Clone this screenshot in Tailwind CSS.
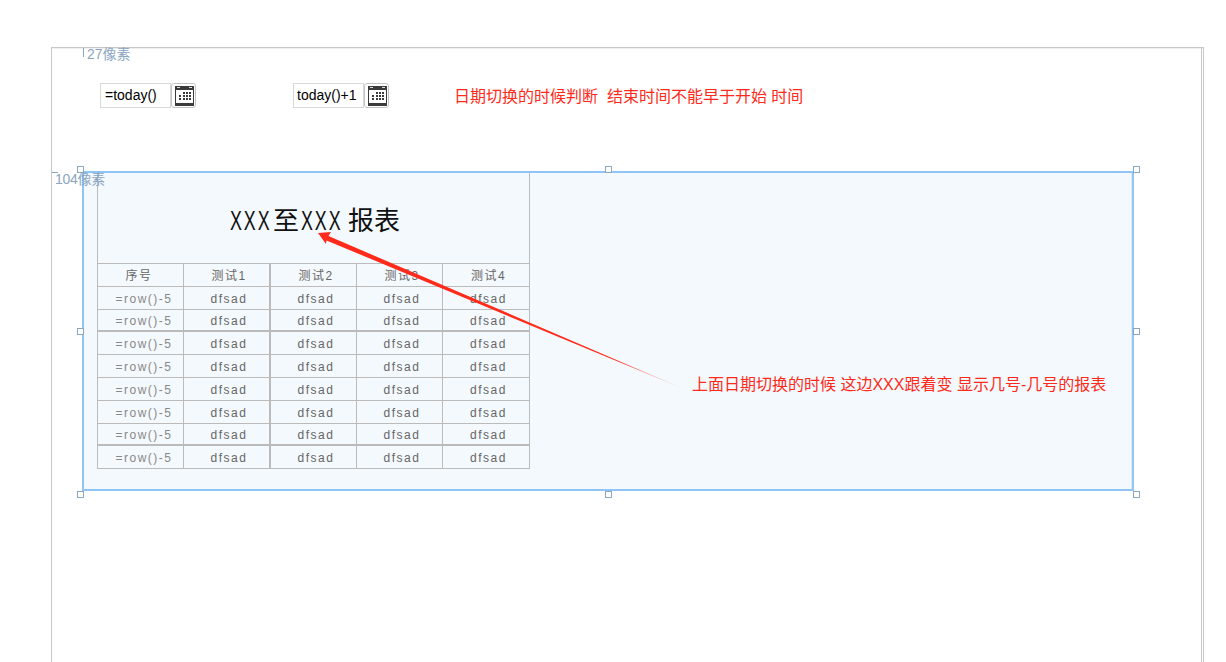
<!DOCTYPE html>
<html lang="en">
<head>
  <meta charset="UTF-8">
  <title>Report layout</title>
  <script src="https://cdn.jsdelivr.net/npm/@tailwindcss/browser@4"></script>
</head>
<body class="bg-white h-[662px] overflow-hidden relative font-['Liberation_Sans','Noto_Sans_CJK_SC',sans-serif]">

  <!-- page frame -->
  <div class="absolute left-[51px] top-[47px] w-[1153px] h-[640px] border border-[#c8c8c8] shadow-[inset_0_1px_0_#f0f0f0]">
    <div class="absolute right-[1px] top-0 bottom-0 w-px bg-[#c8c8c8]"></div>
  </div>

  <!-- ruler labels -->
  <div class="absolute left-[83px] top-[48px] w-px h-[9px] bg-[#8aa6c1]"></div>
  <div class="absolute left-[87px] top-[44px] text-[14px] leading-[20px] text-[#8aa6c1]">27像素</div>
  <div class="absolute left-[52px] top-[172px] w-[6px] h-px bg-[#8aa6c1]"></div>

  <!-- date inputs -->
  <div class="absolute left-[100px] top-[83px] flex">
    <div class="w-[71px] h-[25px] border border-[#d8d8d8] pl-[4px] text-[14px] leading-[23px] text-black">=today()</div>
    <div class="w-[25px] h-[25px] border border-[#c4c4c4] rounded-[3px] pl-px flex items-center justify-center">
      <svg width="19" height="20" viewBox="0 0 19 20">
        <rect x="0" y="0" width="19" height="20" fill="#3a3a3a"/>
        <rect x="2" y="1" width="3" height="1" fill="#ddd"/>
        <rect x="14" y="1" width="3" height="1" fill="#ddd"/>
        <rect x="1" y="4" width="17" height="13" fill="#fff"/>
        <path d="M8 6h2v2H8zM11 6h2v2h-2zM14 6h2v2h-2zM4 9h2v2H4zM8 9h2v2H8zM11 9h2v2h-2zM14 9h2v2h-2zM4 12h2v2H4zM8 12h2v2H8zM11 12h2v2h-2zM14 12h2v2h-2z" fill="#3a3a3a"/>
      </svg>
    </div>
  </div>
  <div class="absolute left-[293px] top-[83px] flex">
    <div class="w-[71px] h-[25px] border border-[#d8d8d8] pl-[3px] text-[14px] leading-[23px] text-black">today()+1</div>
    <div class="w-[25px] h-[25px] border border-[#c4c4c4] rounded-[3px] pl-px flex items-center justify-center">
      <svg width="19" height="20" viewBox="0 0 19 20">
        <rect x="0" y="0" width="19" height="20" fill="#3a3a3a"/>
        <rect x="2" y="1" width="3" height="1" fill="#ddd"/>
        <rect x="14" y="1" width="3" height="1" fill="#ddd"/>
        <rect x="1" y="4" width="17" height="13" fill="#fff"/>
        <path d="M8 6h2v2H8zM11 6h2v2h-2zM14 6h2v2h-2zM4 9h2v2H4zM8 9h2v2H8zM11 9h2v2h-2zM14 9h2v2h-2zM4 12h2v2H4zM8 12h2v2H8zM11 12h2v2h-2zM14 12h2v2h-2z" fill="#3a3a3a"/>
      </svg>
    </div>
  </div>

  <div class="absolute left-[454px] top-[85px] text-[16px] leading-[24px] text-[#ff2a1a] whitespace-pre">日期切换的时候判断  结束时间不能早于开始 时间</div>

  <!-- selected report block -->
  <div class="absolute left-[82px] top-[171px] w-[1052px] h-[320px] border-2 border-[#90c4f7] bg-[#f4f9fd] pl-[13px]">
    <div class="absolute right-0 top-0 bottom-0 w-px bg-[#e3e8ec]"></div>
    <div class="w-[433px] border-l border-r border-[#bbbbbb] text-[#666]">
      <div class="h-[91px] border-b border-[#bbbbbb] flex items-baseline pl-[132px] pt-[32px] text-[26px] leading-[32px] text-[#111]">
        <span class="inline-block w-[43px] text-[27px] tracking-[3px] origin-left scale-x-[.66]">XXX</span><span class="mr-[2px]">至</span><span class="inline-block w-[43px] text-[27px] tracking-[3px] origin-left scale-x-[.66]">XXX</span><span class="ml-[4px]">报表</span>
      </div>
      <div id="rows"></div>
    </div>
  </div>

  <div class="absolute left-[55px] top-[169px] text-[14px] leading-[20px] tracking-[-0.3px] text-[#8aa6c1]">104像素</div>

  <!-- resize handles -->
  <div class="absolute left-[77px] top-[166px] w-[7px] h-[7px] bg-white border border-[#8aa6c1]"></div>
  <div class="absolute left-[605px] top-[166px] w-[7px] h-[7px] bg-white border border-[#8aa6c1]"></div>
  <div class="absolute left-[1133px] top-[166px] w-[7px] h-[7px] bg-white border border-[#8aa6c1]"></div>
  <div class="absolute left-[77px] top-[328px] w-[7px] h-[7px] bg-white border border-[#8aa6c1]"></div>
  <div class="absolute left-[1133px] top-[328px] w-[7px] h-[7px] bg-white border border-[#8aa6c1]"></div>
  <div class="absolute left-[77px] top-[491px] w-[7px] h-[7px] bg-white border border-[#8aa6c1]"></div>
  <div class="absolute left-[605px] top-[491px] w-[7px] h-[7px] bg-white border border-[#8aa6c1]"></div>
  <div class="absolute left-[1133px] top-[491px] w-[7px] h-[7px] bg-white border border-[#8aa6c1]"></div>

  <!-- arrow annotation -->
  <svg class="absolute left-0 top-0" width="1226" height="662" viewBox="0 0 1226 662">
    <defs>
      <linearGradient id="tail" gradientUnits="userSpaceOnUse" x1="318" y1="233" x2="684" y2="389">
        <stop offset="0" stop-color="#ff2a1a"/>
        <stop offset="0.8" stop-color="#ff2a1a"/>
        <stop offset="1" stop-color="#ff2a1a" stop-opacity="0.15"/>
      </linearGradient>
    </defs>
    <polygon points="318,233 331,232 328.5,236 684,389 326.5,240.5 326,244" fill="url(#tail)"/>
  </svg>

  <div class="absolute left-[692px] top-[373px] text-[16px] leading-[24px] text-[#ff2a1a] whitespace-pre">上面日期切换的时候 这边XXX跟着变 显示几号-几号的报表</div>

  <script>
    const rowHeights = [23, 23, 22, 23, 23, 23, 23, 22, 23];
    const thickAfter = [2, 7];
    const head = ['序号', '测试1', '测试2', '测试3', '测试4'];
    const body = ['=row()-5', 'dfsad', 'dfsad', 'dfsad', 'dfsad'];

    document.getElementById('rows').innerHTML = rowHeights.map((h, i) => {
      const cells = i === 0 ? head : body;
      const rowLine = thickAfter.includes(i) ? 'border-b-2' : 'border-b';
      const firstCell = i === 0 ? 'pr-[3px]' : 'pl-[7px] text-[#888]';
      return `<div class="flex ${rowLine} border-[#bbbbbb] text-[12px] tracking-[1.5px] text-center" style="height:${h}px;line-height:${h + 1}px">
        <div class="w-[86px] border-r border-[#bbbbbb] ${firstCell}">${cells[0]}</div>
        <div class="w-[87px] border-r-2 border-[#bbbbbb] pl-[5px]">${cells[1]}</div>
        <div class="w-[86px] border-r border-[#bbbbbb] pl-[5px]">${cells[2]}</div>
        <div class="w-[86px] border-r border-[#bbbbbb] pl-[5px]">${cells[3]}</div>
        <div class="flex-1 pl-[5px]">${cells[4]}</div>
      </div>`;
    }).join('');
  </script>
</body>
</html>
